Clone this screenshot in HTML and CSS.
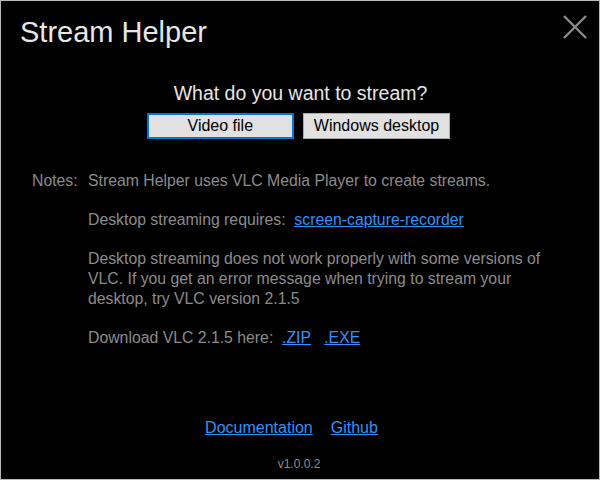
FILE: index.html
```html
<!DOCTYPE html>
<html>
<head>
<meta charset="utf-8">
<link rel="stylesheet" href="styles.css">
</head>
<body>
<div class="window">
  <div class="header">
    <h1 class="title">Stream Helper</h1>
    <svg class="close" width="24" height="24" viewBox="0 0 24 24"><path d="M1 1L23 23M23 1L1 23" stroke="#8a8a8a" stroke-width="2.4" fill="none"/></svg>
  </div>
  <div class="question">What do you want to stream?</div>
  <div class="buttons">
    <button class="btn btn-primary">Video file</button>
    <button class="btn">Windows desktop</button>
  </div>
  <div class="notes">
    <div class="label">Notes:</div>
    <div class="body">
      <p>Stream Helper uses VLC Media Player to create streams.</p>
      <p>Desktop streaming requires:&nbsp; <a href="#">screen-capture-recorder</a></p>
      <p>Desktop streaming does not work properly with some versions of VLC. If you get an error message when trying to stream your desktop, try VLC version 2.1.5</p>
      <p>Download VLC 2.1.5 here:&nbsp; <a href="#">.ZIP</a>&nbsp;&nbsp; <a href="#">.EXE</a></p>
    </div>
  </div>
  <div class="footer">
    <div class="links"><a href="#">Documentation</a><a href="#">Github</a></div>
    <div class="version">v1.0.0.2</div>
  </div>
</div>
</body>
</html>
```
FILE: styles.css
```css
html, body { margin: 0; padding: 0; background: #000; }
.window {
  box-sizing: border-box;
  width: 600px; height: 480px;
  border: 1px solid #b9b9b9;
  background: #000;
  font-family: "Liberation Sans", Arial, sans-serif;
  display: flex; flex-direction: column;
  position: relative;
}
.header { display: flex; justify-content: space-between; padding: 15px 12px 0 19px; height: 48px; box-sizing: border-box; }
.title { margin: 0; font-weight: normal; font-size: 29px; color: #e6e6e6; line-height: 32px; }
.close { margin-top: -1px; }
.question { text-align: center; font-size: 19.5px; color: #e6e6e6; margin-top: 32px; line-height: 24px; padding-left: 1px; }
.buttons { display: flex; justify-content: center; gap: 9px; margin-top: 8px; padding-right: 3px; }
.btn {
  font-family: "Liberation Sans", Arial, sans-serif;
  font-size: 16px; color: #000; background: #e1e1e1;
  border: 1px solid #adadad; height: 26px; padding: 0 10px; margin: 0;
  box-sizing: border-box; line-height: 22px;
}
.btn-primary { border: 2px solid #0078d7; width: 147px; }
.notes { display: flex; margin-top: 32px; padding-left: 31px; font-size: 15.8px; color: #8c8c8c; }
.label { width: 56px; line-height: 20px; }
.body { width: 470px; }
.body p { margin: 0 0 19px 0; line-height: 20px; }
a { color: #3391ff; text-decoration: underline; }
.footer { margin-top: auto; text-align: center; padding-bottom: 8px; }
.links { display: flex; justify-content: center; gap: 18px; font-size: 16px; line-height: 20px; padding-right: 17px; }
.version { font-size: 12px; color: #8c8c8c; margin-top: 19px; line-height: 14px; padding-right: 2px; }
```
